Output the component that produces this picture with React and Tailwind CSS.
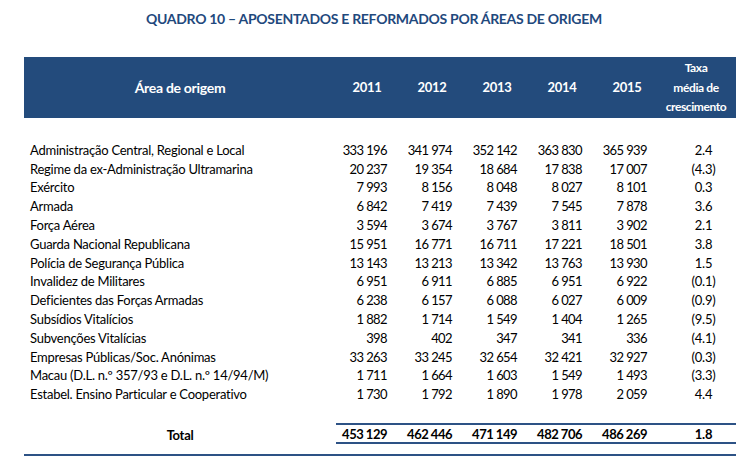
const rows = [
  ['Administração Central, Regional e Local', '333 196', '341 974', '352 142', '363 830', '365 939', '2.4'],
  ['Regime da ex-Administração Ultramarina', '20 237', '19 354', '18 684', '17 838', '17 007', '(4.3)'],
  ['Exército', '7 993', '8 156', '8 048', '8 027', '8 101', '0.3'],
  ['Armada', '6 842', '7 419', '7 439', '7 545', '7 878', '3.6'],
  ['Força Aérea', '3 594', '3 674', '3 767', '3 811', '3 902', '2.1'],
  ['Guarda Nacional Republicana', '15 951', '16 771', '16 711', '17 221', '18 501', '3.8'],
  ['Polícia de Segurança Pública', '13 143', '13 213', '13 342', '13 763', '13 930', '1.5'],
  ['Invalidez de Militares', '6 951', '6 911', '6 885', '6 951', '6 922', '(0.1)'],
  ['Deficientes das Forças Armadas', '6 238', '6 157', '6 088', '6 027', '6 009', '(0.9)'],
  ['Subsídios Vitalícios', '1 882', '1 714', '1 549', '1 404', '1 265', '(9.5)'],
  ['Subvenções Vitalícias', '398', '402', '347', '341', '336', '(4.1)'],
  ['Empresas Públicas/Soc. Anónimas', '33 263', '33 245', '32 654', '32 421', '32 927', '(0.3)'],
  ['Macau (D.L. n.º 357/93 e D.L. n.º 14/94/M)', '1 711', '1 664', '1 603', '1 549', '1 493', '(3.3)'],
  ['Estabel. Ensino Particular e Cooperativo', '1 730', '1 792', '1 890', '1 978', '2 059', '4.4'],
];

const total = ['453 129', '462 446', '471 149', '482 706', '486 269', '1.8'];
const years = ['2011', '2012', '2013', '2014', '2015'];

const grid = 'grid grid-cols-[312px_65px_65px_65px_65px_65px_75px]';

export default function App() {
  return (
    <div className="w-[755px] h-[466px] bg-white font-['Lato',sans-serif] text-black overflow-hidden">
      {/* Title */}
      <div className="pt-[10px] h-[57px] pl-[146px]">
        <h1 className="text-[14px] font-bold text-[#1f497d] tracking-[-0.3px] leading-[18px]">
          QUADRO 10 – APOSENTADOS E REFORMADOS POR ÁREAS DE ORIGEM
        </h1>
      </div>

      <div className="ml-[24px] w-[712px]">
        {/* Header band */}
        <div className={`${grid} h-[61px] bg-[#234b7c] text-white font-bold text-[13px] items-center`}>
          <div className="text-center text-[14px] tracking-[-0.3px]">Área de origem</div>
          {years.map((y) => (
            <div key={y} className="text-center pr-[3px] tracking-[-0.3px]">{y}</div>
          ))}
          <div className="text-center text-[12px] leading-[19.5px] tracking-[-0.4px] pr-[5px]">
            Taxa<br />média de<br />crescimento
          </div>
        </div>

        {/* Body rows */}
        <div className="pt-[23px] text-[13px] tracking-[-0.25px]">
          {rows.map((r) => (
            <div key={r[0]} className={`${grid} h-[18.8px] items-center leading-none`}>
              <div className="pl-[6px] whitespace-nowrap">{r[0]}</div>
              {r.slice(1, 6).map((v, i) => (
                <div key={i} className="text-right pr-[14px] tracking-[-0.6px]">{v}</div>
              ))}
              <div className="text-center pl-[10px]">{r[6]}</div>
            </div>
          ))}
        </div>

        {/* Total */}
        <div className="mt-[19px]">
          <div className={`${grid} text-[13px] font-bold tracking-[-0.3px]`}>
            <div className="text-center h-[21px] flex items-center justify-center mt-[2px]">Total</div>
            <div className="col-span-6 border-y-2 border-[#2d5285] h-[21px] grid grid-cols-[65px_65px_65px_65px_65px_75px] items-center">
              {total.slice(0, 5).map((v, i) => (
                <div key={i} className="text-right pr-[14px] tracking-[-0.5px]">{v}</div>
              ))}
              <div className="text-center pl-[10px]">{total[5]}</div>
            </div>
          </div>
          <div className="mt-[8px] h-[2px] bg-[#2d5285]" />
        </div>
      </div>
    </div>
  );
}
